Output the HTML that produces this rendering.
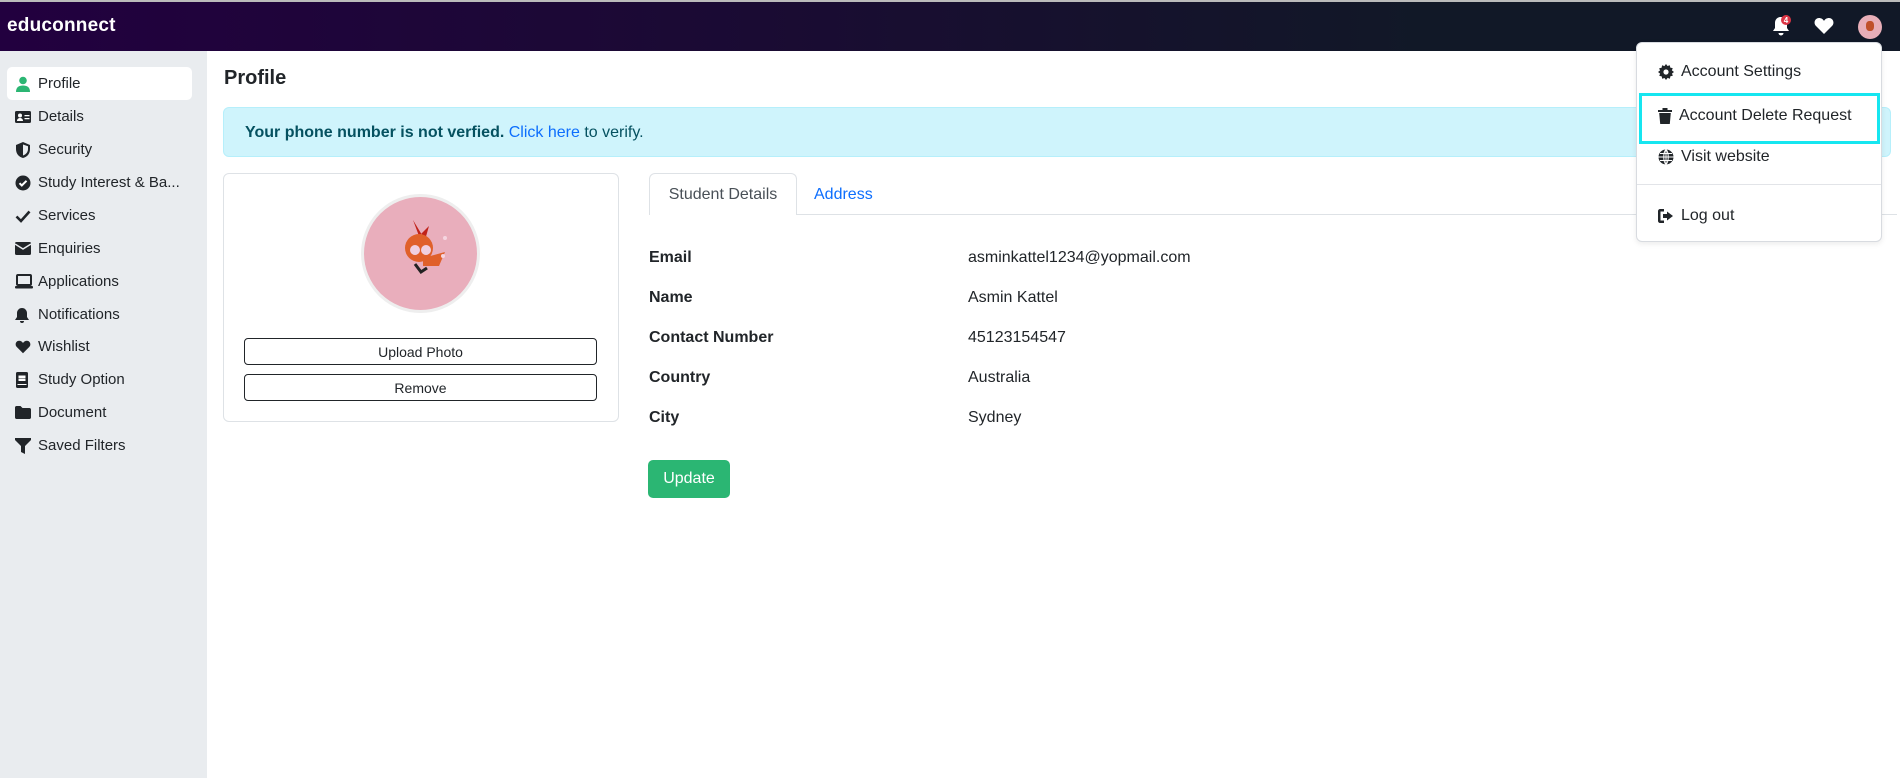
<!DOCTYPE html>
<html><head><meta charset="utf-8">
<style>
*{box-sizing:border-box;margin:0;padding:0}
body{width:1900px;height:778px;overflow:hidden;font-family:"Liberation Sans",sans-serif;color:#212529;background:#fff;position:relative}
.hdr{position:absolute;left:0;top:0;width:1900px;height:51px;border-top:2px solid #bbb;background:linear-gradient(90deg,#22003f 0%,#1a0b33 40%,#111827 75%,#111827 100%)}
.logo{position:absolute;left:7px;top:13px;color:#fff;font-size:19px;font-weight:bold;letter-spacing:0.2px}
.side{position:absolute;left:0;top:51px;width:207px;height:727px;background:#e9ecef}
.item{position:absolute;left:7px;width:185px;height:33px;display:flex;align-items:center;font-size:15px;color:#212529}
.item svg{position:absolute;left:8px}
.item span{position:absolute;left:31px}
.item.act{background:#fff;border-radius:5px}
.abs{position:absolute}
.lbl{position:absolute;left:649px;font-size:16px;font-weight:bold;transform:translateY(-50%)}
.val{position:absolute;left:968px;font-size:16px;transform:translateY(-50%)}
.btn{position:absolute;left:244px;width:353px;height:27px;border:1px solid #212529;border-radius:4px;font-size:14px;display:flex;align-items:center;justify-content:center;background:#fff}
.dd{position:absolute;left:1636px;top:42px;width:246px;height:200px;background:#fff;border:1px solid #d8dbe0;border-radius:6px;box-shadow:0 2px 6px rgba(0,0,0,.08)}
.di{position:absolute;left:0;font-size:16px;display:flex;align-items:center}
</style></head><body>
<div class="hdr"><div class="logo">educonnect</div>
<svg class="abs" style="left:1770px;top:12px" width="22" height="24" viewBox="0 0 22 24"><path d="M11 3c-4 0-6 3-6 6v5l-2 3h16l-2-3V9c0-3-2-6-6-6z M8.5 19a2.5 2.5 0 0 0 5 0z" fill="#fff"/><circle cx="16" cy="6" r="5" fill="#dc3545"/><text x="16" y="9" font-size="8" fill="#fff" text-anchor="middle" font-family="Liberation Sans" font-weight="bold">4</text></svg>
<svg class="abs" style="left:1814px;top:15px" width="20" height="18" viewBox="0 0 20 18"><path d="M10 17L2 9C-1 6 1 1 5 1c2 0 4 1 5 3 1-2 3-3 5-3 4 0 6 5 3 8z" fill="#fff"/></svg>
<div class="abs" style="left:1858px;top:13px;width:24px;height:24px;border-radius:50%;background:#e8aeb8"><div style="position:absolute;left:8px;top:6px;width:8px;height:10px;background:#c0502a;border-radius:40%"></div></div>
</div>
<div class="side">
<div class="item act" style="top:16px"><svg width="16" height="16" viewBox="0 0 16 16"><circle cx="8" cy="4.5" r="3.8" fill="#2bb673"/><path d="M1 16c0-5 3-6.5 7-6.5s7 1.5 7 6.5z" fill="#2bb673"/></svg><span>Profile</span></div>
<div class="item" style="top:49px"><svg width="16" height="14" viewBox="0 0 16 14"><rect x="0" y="1" width="16" height="12" rx="1.5" fill="#212529"/><circle cx="5" cy="5.5" r="2" fill="#fff"/><path d="M2 11c0-2 1.5-3 3-3s3 1 3 3z M9.5 5h5v1.3h-5z M9.5 8h5v1.3h-5z" fill="#fff"/></svg><span>Details</span></div>
<div class="item" style="top:82px"><svg width="16" height="16" viewBox="0 0 16 16"><path d="M8 0L1 3v4c0 5 3 8 7 9 4-1 7-4 7-9V3z" fill="#212529"/><path d="M8 2.5v11c3-1 5-3.5 5-6.5V4.3z" fill="#e9ecef"/></svg><span>Security</span></div>
<div class="item" style="top:115px"><svg width="16" height="16" viewBox="0 0 16 16"><circle cx="8" cy="8" r="7.5" fill="#212529"/><path d="M4.5 8.2l2.3 2.3 4.7-4.7" stroke="#fff" stroke-width="2" fill="none"/></svg><span>Study Interest &amp; Ba...</span></div>
<div class="item" style="top:148px"><svg width="16" height="14" viewBox="0 0 16 14"><path d="M1.5 7.5l4.5 4.5 8.5-9.5" stroke="#212529" stroke-width="2.6" fill="none"/></svg><span>Services</span></div>
<div class="item" style="top:181px"><svg width="16" height="13" viewBox="0 0 16 13"><rect x="0" y="0" width="16" height="13" rx="1.5" fill="#212529"/><path d="M0 2l8 5 8-5" stroke="#e9ecef" stroke-width="1.5" fill="none"/></svg><span>Enquiries</span></div>
<div class="item" style="top:214px"><svg width="18" height="15" viewBox="0 0 18 15"><rect x="2" y="1" width="14" height="10" rx="1" fill="none" stroke="#212529" stroke-width="2"/><rect x="0" y="12" width="18" height="2.5" rx="1" fill="#212529"/></svg><span>Applications</span></div>
<div class="item" style="top:247px"><svg width="14" height="16" viewBox="0 0 14 16"><path d="M7 1c-3 0-5 2.5-5 5v4l-2 3h14l-2-3V6c0-2.5-2-5-5-5z M5 14a2 2 0 0 0 4 0z" fill="#212529"/></svg><span>Notifications</span></div>
<div class="item" style="top:279px"><svg width="16" height="14" viewBox="0 0 20 18"><path d="M10 17L2 9C-1 6 1 1 5 1c2 0 4 1 5 3 1-2 3-3 5-3 4 0 6 5 3 8z" fill="#212529"/></svg><span>Wishlist</span></div>
<div class="item" style="top:312px"><svg width="14" height="16" viewBox="0 0 14 16"><rect x="1" y="0" width="12" height="16" rx="1.5" fill="#212529"/><path d="M4 4h6v1.5H4z M4 7h6v1.5H4z M2.5 12.5h9" stroke="#fff" fill="#fff"/></svg><span>Study Option</span></div>
<div class="item" style="top:345px"><svg width="16" height="13" viewBox="0 0 16 13"><path d="M0 1.5C0 .7.7 0 1.5 0h4l2 2h7c.8 0 1.5.7 1.5 1.5v8c0 .8-.7 1.5-1.5 1.5h-13C.7 13 0 12.300 0 11.5z" fill="#212529"/></svg><span>Document</span></div>
<div class="item" style="top:378px"><svg width="16" height="16" viewBox="0 0 16 16"><path d="M0 0h16v2l-6 6v8l-4-2V8L0 2z" fill="#212529"/></svg><span>Saved Filters</span></div>
</div>

<div class="abs" style="left:224px;top:67px;font-size:20px;font-weight:bold">Profile</div>
<div class="abs" style="left:223px;top:107px;width:1668px;height:50px;background:#cff4fc;border:1px solid #b6effb;border-radius:6px;font-size:16px;color:#055160;padding:16px 21px"><b>Your phone number is not verfied.</b> <span style="color:#0d6efd">Click here</span> to verify.</div>

<div class="abs" style="left:223px;top:173px;width:396px;height:249px;border:1px solid #dee2e6;border-radius:6px"></div>
<div class="abs" style="left:361px;top:194px;width:119px;height:119px;border-radius:50%;background:#e9aebc;border:3px solid #eee"></div>
<svg class="abs" style="left:393px;top:220px" width="60" height="64" viewBox="0 0 60 64"><path d="M20 0l6 16 10-10-4 14z" fill="#c0221a"/><circle cx="26" cy="28" r="14" fill="#e0602a"/><circle cx="22" cy="30" r="5" fill="#f0d0e0"/><circle cx="33" cy="30" r="5" fill="#f0d0e0"/><path d="M30 38l22-6-6 14-16 0z" fill="#e0602a"/><path d="M22 44l6 8 6-4" stroke="#222" stroke-width="3" fill="none"/><circle cx="52" cy="18" r="2" fill="#f5d5e0"/><circle cx="50" cy="36" r="2" fill="#f5d5e0"/></svg>
<div class="btn" style="top:338px">Upload Photo</div>
<div class="btn" style="top:374px">Remove</div>

<div class="abs" style="left:649px;top:214px;width:1248px;height:1px;background:#dee2e6"></div>
<div class="abs" style="left:649px;top:173px;width:148px;height:42px;border:1px solid #dee2e6;border-bottom:none;border-radius:6px 6px 0 0;background:#fff;font-size:16px;color:#495057;display:flex;align-items:center;justify-content:center">Student Details</div>
<div class="abs" style="left:814px;top:186px;font-size:16px;color:#0d6efd">Address</div>

<div class="lbl" style="top:258px">Email</div><div class="val" style="top:258px">asminkattel1234@yopmail.com</div>
<div class="lbl" style="top:298px">Name</div><div class="val" style="top:298px">Asmin Kattel</div>
<div class="lbl" style="top:338px">Contact Number</div><div class="val" style="top:338px">45123154547</div>
<div class="lbl" style="top:378px">Country</div><div class="val" style="top:378px">Australia</div>
<div class="lbl" style="top:418px">City</div><div class="val" style="top:418px">Sydney</div>
<div class="abs" style="left:648px;top:460px;width:82px;height:38px;background:#2bb673;border-radius:5px;color:#fff;font-size:16px;display:flex;align-items:center;justify-content:center">Update</div>

<div class="dd">
<div class="di" style="top:20px;left:21px"><svg width="16" height="16" viewBox="0 0 16 16"><path d="M8 0l1.5 2 2.3-.8.5 2.4 2.4.5-.8 2.3L16 8l-2 1.5.8 2.3-2.4.5-.5 2.4-2.3-.8L8 16l-1.5-2-2.3.8-.5-2.4-2.4-.5.8-2.3L0 8l2-1.5-.8-2.3 2.4-.5.5-2.4 2.300.8z" fill="#212529"/><circle cx="8" cy="8" r="2.6" fill="#fff"/></svg><span style="margin-left:7px">Account Settings</span></div>
<div class="abs" style="left:2px;top:50px;width:241px;height:51px;border:3px solid #16e6f0"></div>
<div class="di" style="top:64px;left:21px"><svg width="14" height="16" viewBox="0 0 14 16"><path d="M0 2h14v2H0z M4.5 0h5v2h-5z M1.2 5h11.6l-1 11H2.2z" fill="#212529"/></svg><span style="margin-left:7px">Account Delete Request</span></div>
<div class="di" style="top:105px;left:21px"><svg width="16" height="16" viewBox="0 0 16 16"><circle cx="8" cy="8" r="7.5" fill="#212529"/><path d="M0.5 8h15 M8 .5v15 M8 .5c-3 3-3 12 0 15 M8 .5c3 3 3 12 0 15 M2 4.5h12 M2 11.5h12" stroke="#fff" stroke-width="1" fill="none"/></svg><span style="margin-left:7px">Visit website</span></div>
<div class="abs" style="left:0;top:141px;width:244px;height:1px;background:#e2e4e8"></div>
<div class="di" style="top:164px;left:21px"><svg width="16" height="14" viewBox="0 0 16 14"><path d="M6 0H2C1 0 0 1 0 2v10c0 1 1 2 2 2h4v-2.5H2.5v-9H6z M9 2.5v2.5H5v4h4v2.5l6-4.5z" fill="#212529"/></svg><span style="margin-left:7px">Log out</span></div>
</div>
</body></html>
